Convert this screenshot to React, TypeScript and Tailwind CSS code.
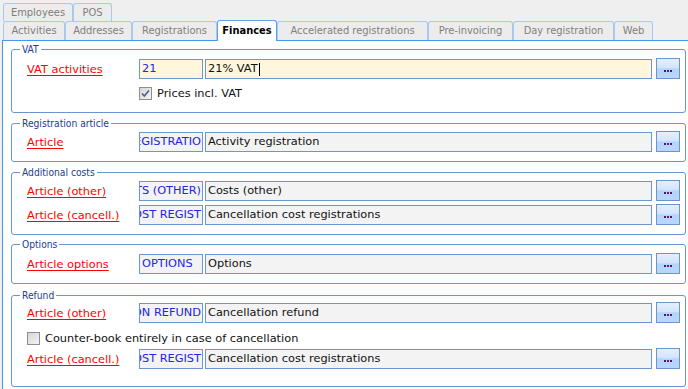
import React from "react";

const BODY = "font-['DejaVu_Sans',sans-serif] text-[11.35px]";
const COND = "font-['DejaVu_Sans_Condensed','DejaVu_Sans',sans-serif] text-[11px]";
const TITLE = "font-['DejaVu_Sans_Condensed','DejaVu_Sans',sans-serif] text-[10.2px]";

function Tab({ label, w, active }: { label: string; w: string; active?: boolean }) {
  if (active) {
    return (
      <div
        className={`${w} h-[21px] -mt-px -mb-px relative z-10 flex items-center justify-center pt-[1px] bg-white border border-b-0 border-[#5aa0ea] rounded-t-[3px] ${COND} font-bold text-black`}
      >
        {label}
      </div>
    );
  }
  return (
    <div
      className={`${w} h-full flex items-center justify-center pt-[1px] bg-[#ececec] border border-b-0 border-[#a9c8ee] rounded-t-[3px] ${COND} text-[#808080]`}
    >
      {label}
    </div>
  );
}

function Dots() {
  return (
    <div className="w-[24px] h-[21px] -mt-px ml-[4px] shrink-0 self-start border border-[#6d95cb] bg-[linear-gradient(to_bottom,#e6effc_0%,#d3e5fb_45%,#b5d4fa_52%,#b9d7fb_100%)] flex items-end justify-center pb-[6px] gap-[1px]">
      <span className="w-[2px] h-[2px] bg-[#3b1c7a]" />
      <span className="w-[2px] h-[2px] bg-[#8a1050]" />
      <span className="w-[2px] h-[2px] bg-[#3b1c7a]" />
    </div>
  );
}

function Row({
  label,
  code,
  desc,
  cream,
  fit,
  cursor,
  className = "",
}: {
  label: string;
  code: string;
  desc: string;
  cream?: boolean;
  fit?: boolean;
  cursor?: boolean;
  className?: string;
}) {
  const bg = cream ? "bg-[#fff7db]" : "bg-[#f3f3f3]";
  return (
    <div className={`flex items-center h-[20px] ${className}`}>
      <div className="w-[112px] shrink-0 -mt-[2px] leading-[14px]">
        <span className={`${BODY} text-[#ff0000] underline underline-offset-[2px] whitespace-nowrap`}>{label}</span>
      </div>
      <div
        className={`w-[64px] h-[20px] shrink-0 border border-[#6b96d0] ${bg} overflow-hidden flex items-center ${
          fit ? "justify-start pl-[2px]" : "justify-end pr-[1px]"
        }`}
      >
        <span className={`${BODY} text-[#2424e4] whitespace-nowrap shrink-0`}>{code}</span>
      </div>
      <div className={`flex-1 h-[20px] ml-[2px] border border-[#6b96d0] ${bg} flex items-center pl-[2px] overflow-hidden`}>
        <span className={`${BODY} text-[#111] whitespace-nowrap`}>{desc}</span>
        {cursor && <span className="w-px h-[13px] bg-black ml-px" />}
      </div>
      <Dots />
    </div>
  );
}

function Check({ checked, label, className = "" }: { checked?: boolean; label: string; className?: string }) {
  return (
    <div className={`flex items-center h-[17px] ${className}`}>
      <div className="w-[13px] h-[13px] border border-[#8e8f8f] bg-[linear-gradient(135deg,#d6d6d6_0%,#f4f4f4_100%)] flex items-center justify-center shrink-0">
        {checked && (
          <svg width="11" height="11" viewBox="0 0 11 11">
            <path d="M2 5.5 L4.3 8 L9 2.5" fill="none" stroke="#4f6388" strokeWidth="1.7" />
          </svg>
        )}
      </div>
      <span className={`${BODY} text-[#111] ml-[5px] whitespace-nowrap`}>{label}</span>
    </div>
  );
}

function Group({
  title,
  className = "",
  children,
}: {
  title: string;
  className?: string;
  children: React.ReactNode;
}) {
  return (
    <fieldset className={`ml-[8px] mr-[2px] border border-[#6a95cf] rounded-[3px] pl-[15px] pr-[5px] ${className}`}>
      <legend className={`ml-[-7px] px-[2px] ${TITLE} leading-[13px] text-[#223d8e]`}>{title}</legend>
      {children}
    </fieldset>
  );
}

export default function App() {
  return (
    <div className="w-[688px] h-[389px] bg-[#efefef] overflow-hidden flex flex-col">
      <div className="flex pl-[3px] pt-[3px] h-[21px]">
        <Tab label="Employees" w="w-[70px]" />
        <Tab label="POS" w="w-[39px]" />
      </div>
      <div className="flex pl-[3px] h-[19px]">
        <Tab label="Activities" w="w-[62px]" />
        <Tab label="Addresses" w="w-[67px]" />
        <Tab label="Registrations" w="w-[85px]" />
        <Tab label="Finances" w="w-[60px]" active />
        <Tab label="Accelerated registrations" w="w-[151px]" />
        <Tab label="Pre-invoicing" w="w-[85px]" />
        <Tab label="Day registration" w="w-[101px]" />
        <Tab label="Web" w="w-[39px]" />
      </div>
      <div className="flex-1 ml-[2px] bg-white border-l border-t border-[#4498ee] flex flex-col">
        <Group title="VAT" className="mt-[2px] pb-[10px]">
          <Row label="VAT activities" code="21" desc="21% VAT" cream fit cursor className="mt-[3px]" />
          <Check checked label="Prices incl. VAT" className="ml-[112px] mt-[6px]" />
        </Group>
        <Group title="Registration article" className="mt-[4px] pb-[9px]">
          <Row label="Article" code="ACTIVITY REGISTRATIO" desc="Activity registration" className="mt-[2px]" />
        </Group>
        <Group title="Additional costs" className="mt-[4px] pb-[9px]">
          <Row label="Article (other)" code="COSTS (OTHER)" desc="Costs (other)" className="mt-[2px]" />
          <Row label="Article (cancell.)" code="CANCELLATION COST REGIST" desc="Cancellation cost registrations" className="mt-[4px]" />
        </Group>
        <Group title="Options" className="mt-[3px] pb-[9px]">
          <Row label="Article options" code="OPTIONS" desc="Options" fit className="mt-[3px]" />
        </Group>
        <Group title="Refund" className="mt-[5px] pb-[17px]">
          <Row label="Article (other)" code="CANCELLATION REFUND" desc="Cancellation refund" className="mt-[1px]" />
          <Check label="Counter-book entirely in case of cancellation" className="mt-[7px]" />
          <Row label="Article (cancell.)" code="CANCELLATION COST REGIST" desc="Cancellation cost registrations" className="mt-[2px]" />
        </Group>
      </div>
    </div>
  );
}
